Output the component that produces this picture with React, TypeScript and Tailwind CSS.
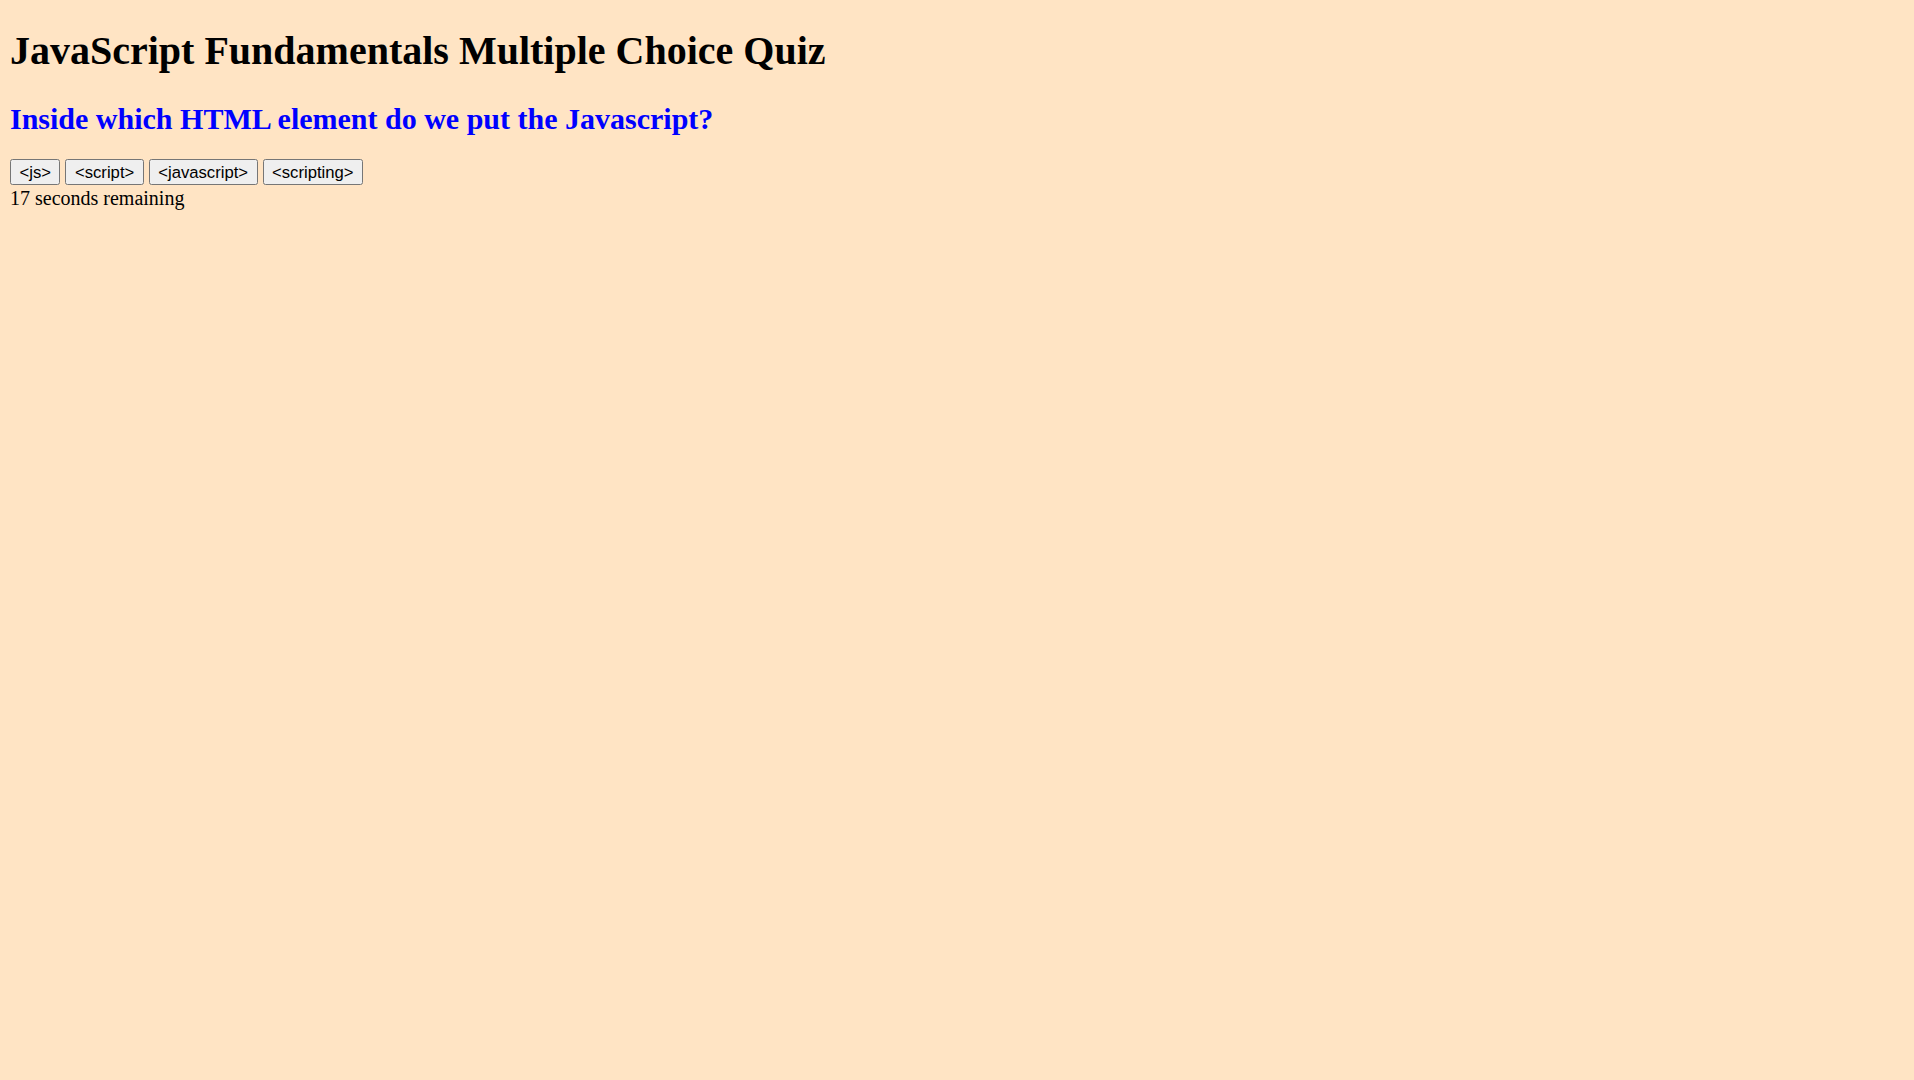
const choices = ['<js>', '<script>', '<javascript>', '<scripting>'];

function ChoiceButton({ label }: { label: string }) {
  return (
    <button
      type="button"
      className="h-[26px] px-[8.5px] bg-[#efefef] border border-[#767676] rounded-[2.5px] text-[16.67px] leading-[19px] text-black font-['Liberation_Sans',Arial,sans-serif] cursor-default"
    >
      {label}
    </button>
  );
}

export default function App() {
  return (
    <div className="min-h-screen bg-[#ffe4c4] px-[10px] pt-[27.5px] font-['Liberation_Serif','Times_New_Roman',serif] text-black">
      <h1 className="m-0 text-[40px] leading-[46px] font-bold">
        JavaScript Fundamentals Multiple Choice Quiz
      </h1>
      <h2 className="mt-[28px] mb-0 text-[30px] leading-[34.5px] font-bold text-[#0000ff]">
        Inside which HTML element do we put the Javascript?
      </h2>
      <div className="mt-[23px] flex items-start gap-[5px] h-[28px]">
        {choices.map((c) => (
          <ChoiceButton key={c} label={c} />
        ))}
      </div>
      <div className="text-[20px] leading-[23px]">17 seconds remaining</div>
    </div>
  );
}
